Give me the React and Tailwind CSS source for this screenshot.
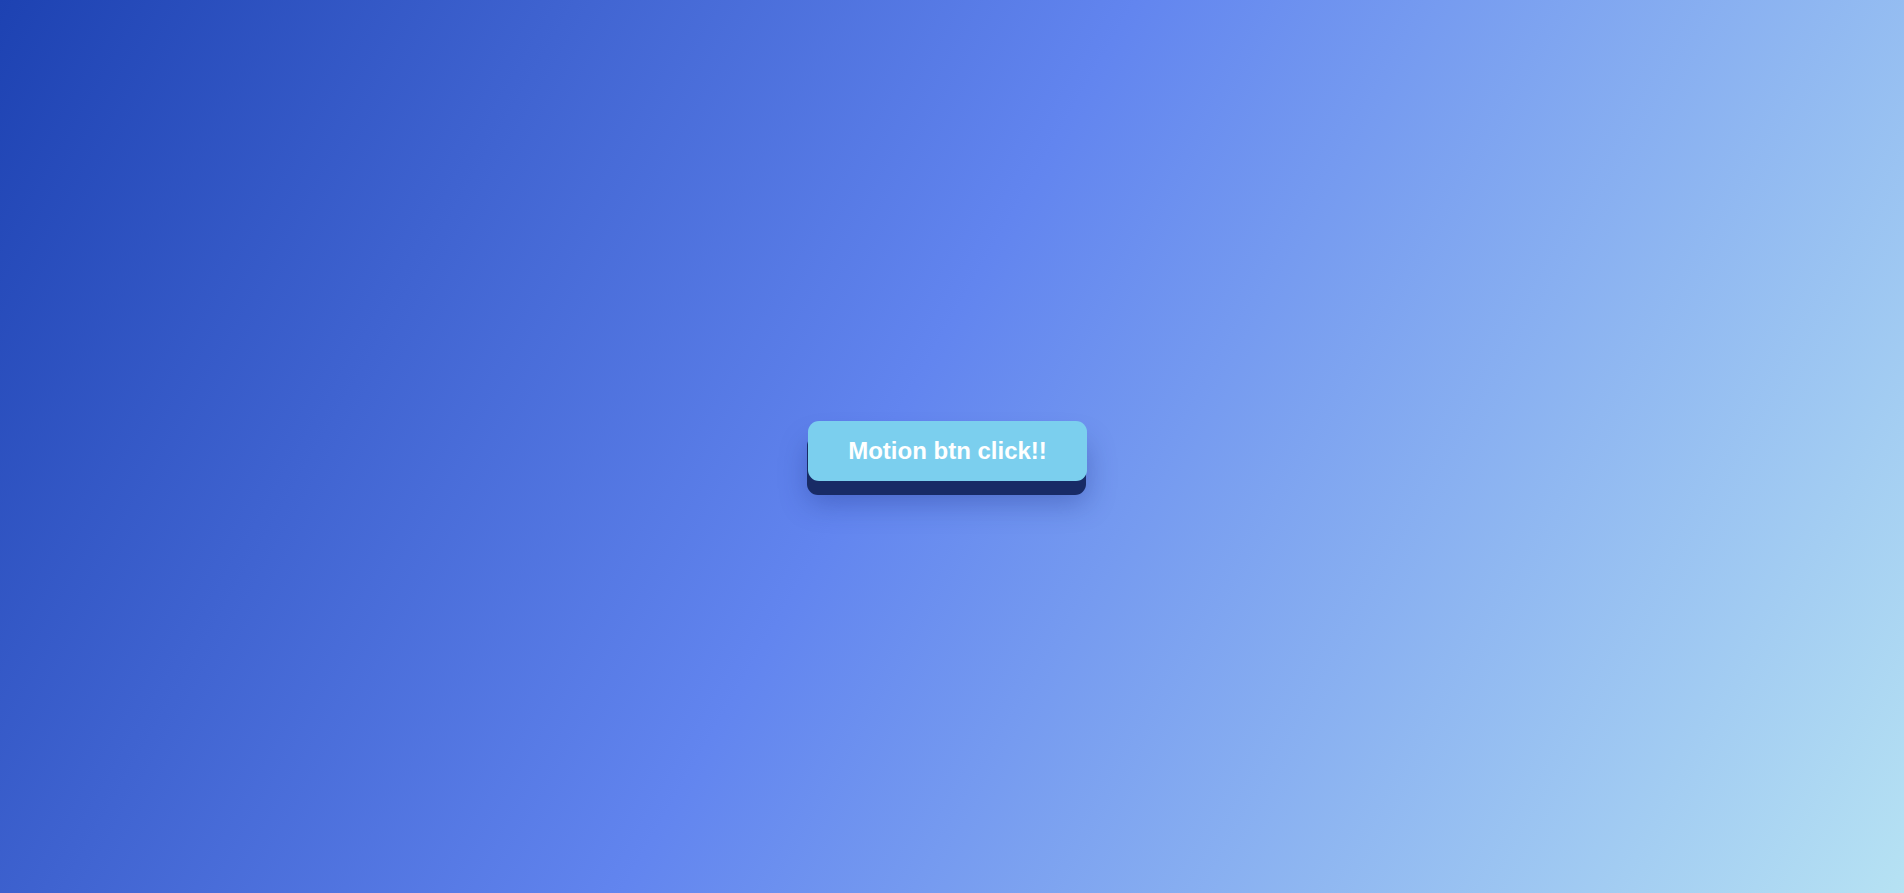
export default function App() {
  return (
    <div className="w-full h-[893px] flex items-center justify-center bg-[linear-gradient(120deg,#1d42b2_0%,#6285ef_47%,#b6e2f3_100%)]" style={{ fontFamily: '"Liberation Sans", Arial, sans-serif' }}>
      <button className="mt-[9px] mr-[9px] w-[279px] h-[60px] rounded-[11px] bg-[#7bcfee] text-white font-bold text-[24px] leading-none shadow-[-1px_14px_0_#182b66,0_22px_28px_rgba(25,45,130,0.35)]">
        Motion btn click!!
      </button>
    </div>
  );
}
